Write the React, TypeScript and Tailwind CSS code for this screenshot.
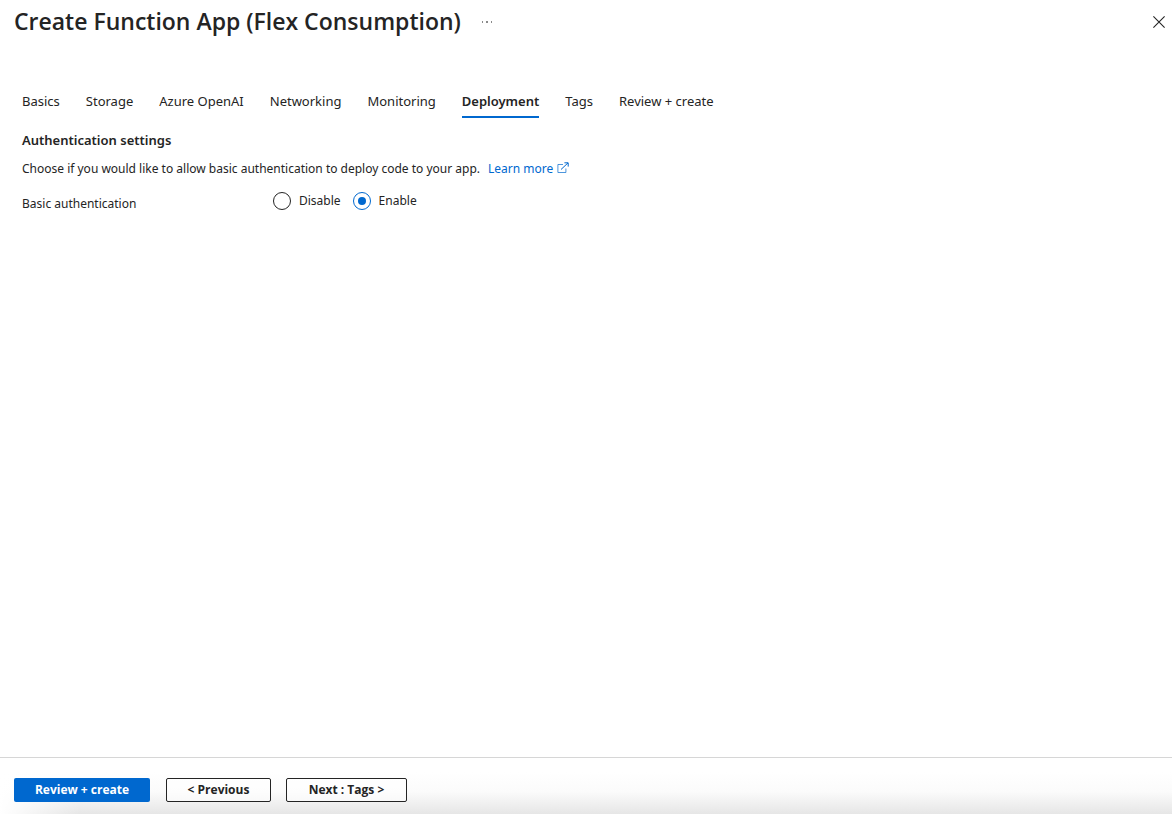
import { useState } from "react";

const tabs = [
  "Basics",
  "Storage",
  "Azure OpenAI",
  "Networking",
  "Monitoring",
  "Deployment",
  "Tags",
  "Review + create",
];

function CloseIcon() {
  return (
    <svg width="12" height="12" viewBox="0 0 12 12" fill="none" stroke="#242424" aria-hidden="true">
      <path d="M.4.4l11.2 11.2M11.6.4L.4 11.6" strokeWidth="1.1" />
    </svg>
  );
}

function MoreIcon() {
  return (
    <svg width="12" height="4" viewBox="0 0 12 4" fill="#8a8a8a" aria-hidden="true">
      <rect x="1" y="1" width="1" height="2" />
      <rect x="5" y="1" width="2" height="2" />
      <rect x="10" y="1" width="1" height="2" />
    </svg>
  );
}

function ExternalLinkIcon() {
  return (
    <svg width="12" height="12" viewBox="0 0 12 12" fill="none" stroke="#0068cf" aria-hidden="true">
      <path d="M6 2.5H.9v8h8V6.5" strokeWidth=".7" />
      <path d="M4 7.5L11 .9M7.4.8h3.8v3.8" strokeWidth="1" />
    </svg>
  );
}

const radioClass =
  "m-0 grid size-[18px] shrink-0 appearance-none place-content-center rounded-full border border-[#242424] bg-white before:size-2 before:rounded-full checked:border-[#0068cf] checked:before:bg-[#0068cf]";

const buttonText = "font-['Open_Sans','Noto_Sans',sans-serif] text-xs font-bold";

const secondaryButton = "h-6 rounded-xs border border-[#242424] bg-white/50 text-[#242424]";

export default function App() {
  const [auth, setAuth] = useState("enable");
  const [active, setActive] = useState("Deployment");

  return (
    <div className="flex min-h-screen flex-col bg-white font-['Noto_Sans','Open_Sans',sans-serif] text-xs text-[#242424]">
      <header className="flex h-11 items-center pr-[7px] pl-3.5">
        <h1 className="pb-0.5 font-['Open_Sans','Noto_Sans',sans-serif] text-[23px] leading-8 font-semibold">
          Create Function App (Flex Consumption)
        </h1>
        <button type="button" aria-label="More" className="ml-5">
          <MoreIcon />
        </button>
        <button type="button" aria-label="Close" className="ml-auto">
          <CloseIcon />
        </button>
      </header>

      <main className="flex-1 px-[22px] pt-[42px]">
        <div role="tablist" className="flex gap-[26px] text-[13px] leading-5">
          {tabs.map((tab) => (
            <button
              key={tab}
              type="button"
              role="tab"
              aria-selected={tab === active}
              onClick={() => setActive(tab)}
              className={
                tab === active
                  ? "border-b-2 border-[#0068cf] pt-[5px] pb-[5px] font-semibold"
                  : "border-b-2 border-transparent pt-[5px] pb-[5px]"
              }
            >
              {tab}
            </button>
          ))}
        </div>

        <h2 className="mt-3 text-[13px] leading-5 font-semibold">Authentication settings</h2>
        <p className="mt-[9px] flex items-center leading-5">
          Choose if you would like to allow basic authentication to deploy code to your app.
          <a href="#learn-more" className="ml-2 flex items-center gap-1 text-[#0068cf]">
            Learn more
            <span className="pb-0.5">
              <ExternalLinkIcon />
            </span>
          </a>
        </p>
        <div role="radiogroup" aria-labelledby="basic-auth" className="mt-3 flex items-start leading-5">
          <span id="basic-auth" className="w-[251px] pt-[3px]">
            Basic authentication
          </span>
          <div className="flex gap-3">
            <label className="flex items-center gap-2">
              <input
                type="radio"
                name="auth"
                className={radioClass}
                checked={auth === "disable"}
                onChange={() => setAuth("disable")}
              />
              Disable
            </label>
            <label className="flex items-center gap-2">
              <input
                type="radio"
                name="auth"
                className={radioClass}
                checked={auth === "enable"}
                onChange={() => setAuth("enable")}
              />
              Enable
            </label>
          </div>
        </div>
      </main>

      <footer className="flex h-[57px] border-t border-[#d6d6d6] bg-[linear-gradient(to_right,white,transparent_80px),linear-gradient(to_bottom,white_25%,#fbfbfb_60%,#e6e6e6)] pt-5 pl-3.5">
        <button type="button" className={`${buttonText} h-6 w-[136px] rounded-xs bg-[#0068cf] text-white`}>
          Review + create
        </button>
        <button type="button" className={`${buttonText} ${secondaryButton} ml-4 w-[105px]`}>
          &lt; Previous
        </button>
        <button type="button" className={`${buttonText} ${secondaryButton} ml-[15px] w-[121px]`}>
          Next : Tags &gt;
        </button>
      </footer>
    </div>
  );
}
